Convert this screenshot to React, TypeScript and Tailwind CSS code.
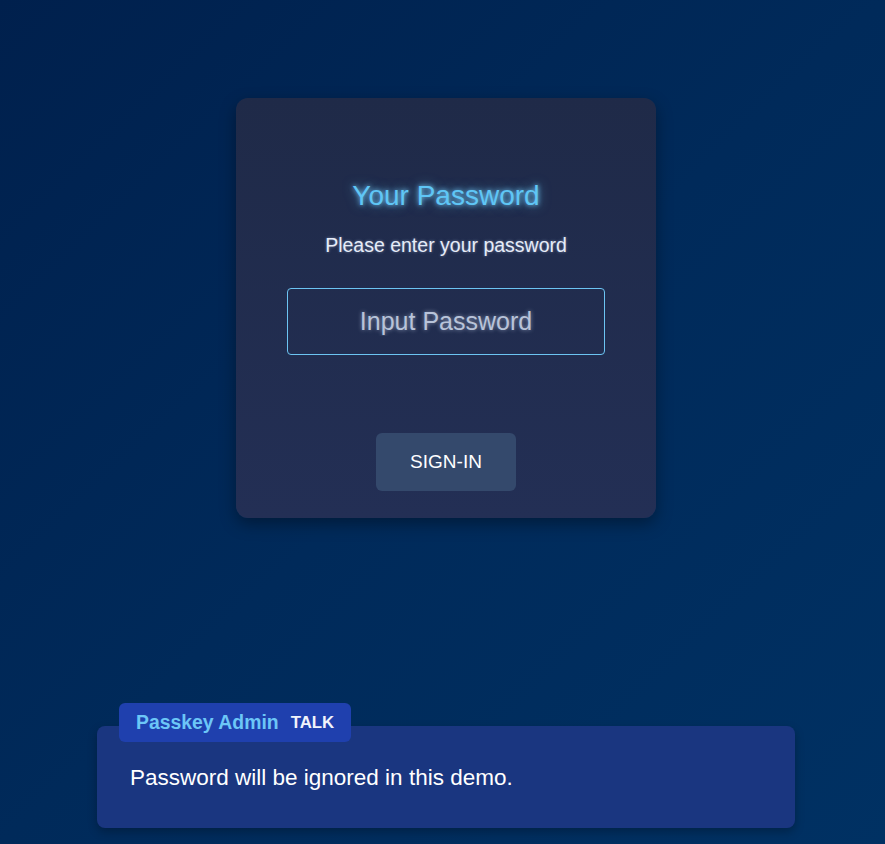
import React from "react";

export default function App() {
  return (
    <div
      className="w-full h-[844px] overflow-hidden bg-gradient-to-br from-[#00204d] via-[#002a5a] to-[#003163] flex flex-col items-center pl-[7px]"
      style={{ fontFamily: '"Liberation Sans", Arial, sans-serif' }}
    >
      <div className="shrink-0 mt-[98px] w-[420px] h-[420px] rounded-[12px] bg-gradient-to-b from-[#1f2a48] to-[#232f55] shadow-[0_6px_16px_rgba(0,0,0,0.35)] flex flex-col items-center pt-[81px] box-border">
        <h1
          className="shrink-0 text-[28px] leading-[34px] text-[#5fc6f6] m-0"
          style={{ textShadow: "0 0 5px rgba(120,205,250,1), 0 0 12px rgba(94,198,246,0.6)" }}
        >
          Your Password
        </h1>
        <p className="shrink-0 mt-[20px] text-[19.5px] leading-[24px] text-[#e6ecf8]" style={{ textShadow: "0 0 3px rgba(200,220,255,0.5)" }}>
          Please enter your password
        </p>
        <div className="shrink-0 mt-[31px] w-[318px] h-[67px] rounded-[4px] border border-[#6cc4f2] flex items-center justify-center box-border">
          <input
            className="w-full h-full bg-transparent text-center text-[25px] outline-none text-[#c8d2e6] placeholder:text-[#b8c3d9]"
            placeholder="Input Password"
            style={{ textShadow: "0 0 4px rgba(200,215,240,0.6)", fontFamily: '"Liberation Sans", Arial, sans-serif' }}
          />
        </div>
        <button className="shrink-0 mt-[78px] w-[140px] h-[58px] rounded-[6px] bg-[#34496c] text-white text-[19px]">
          SIGN-IN
        </button>
      </div>

      <div className="shrink-0 relative mt-[208px] w-[698px] h-[102px] rounded-[8px] bg-[#1a3680] shadow-[0_4px_10px_rgba(0,0,0,0.25)]">
        <div className="absolute left-[22px] top-[-23px] h-[39px] w-[232px] rounded-[6px] bg-[#1f40ae] flex items-center pl-[17px] gap-[12px]">
          <span className="text-[19.4px] font-bold text-[#6cc6f7]">Passkey Admin</span>
          <span className="text-[16.8px] font-bold text-[#f0f3fb]">TALK</span>
        </div>
        <p className="pt-[37px] pl-[33px] text-[22.5px] leading-[30px] text-white">
          Password will be ignored in this demo.
        </p>
      </div>
    </div>
  );
}
